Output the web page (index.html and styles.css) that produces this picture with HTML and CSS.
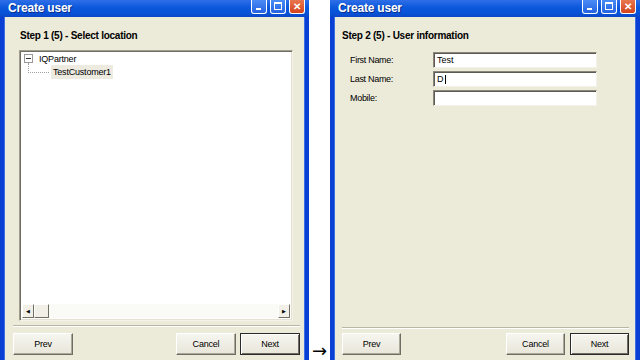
FILE: index.html
```html
<!doctype html>
<html>
<head>
<meta charset="utf-8">
<title>Create user</title>
<link rel="stylesheet" href="styles.css">
</head>
<body>
<div class="desk">
	<div class="win win-one">
		<div class="titlebar">
			<span class="title">Create user</span>
			<div class="tbtns">
				<span class="tb tb-min"><i></i></span>
				<span class="tb tb-max"><i></i></span>
				<span class="tb tb-close">&#x2715;</span>
			</div>
		</div>
		<div class="frame">
			<div class="step">Step 1 (5) - Select location</div>
			<div class="tree">
				<div class="tree-list">
					<div class="node root"><span class="expander"></span>IQPartner</div>
					<div class="node child"><span class="branch"></span><span class="sel">TestCustomer1</span></div>
				</div>
				<div class="hscroll">
					<span class="sbtn">&#9664;</span>
					<span class="thumb"></span>
					<span class="track"></span>
					<span class="sbtn">&#9654;</span>
				</div>
			</div>
			<div class="sep"></div>
			<div class="actions">
				<button class="btn">Prev</button>
				<span class="spacer"></span>
				<button class="btn">Cancel</button>
				<button class="btn btn-default">Next</button>
			</div>
		</div>
	</div>

	<div class="arrow">&rarr;</div>

	<div class="win win-two">
		<div class="titlebar">
			<span class="title">Create user</span>
			<div class="tbtns">
				<span class="tb tb-min"><i></i></span>
				<span class="tb tb-max"><i></i></span>
				<span class="tb tb-close">&#x2715;</span>
			</div>
		</div>
		<div class="frame">
			<div class="step">Step 2 (5) - User information</div>
			<div class="form">
				<div class="row"><label>First Name:</label><div class="field">Test</div></div>
				<div class="row"><label>Last Name:</label><div class="field">D<span class="caret"></span></div></div>
				<div class="row"><label>Mobile:</label><div class="field"></div></div>
			</div>
			<div class="sep"></div>
			<div class="actions">
				<button class="btn">Prev</button>
				<span class="spacer"></span>
				<button class="btn">Cancel</button>
				<button class="btn btn-default">Next</button>
			</div>
		</div>
	</div>
</div>
</body>
</html>
```

FILE: styles.css
```css
*{margin:0;padding:0;box-sizing:border-box;}
body{background:#fff;font-family:"Liberation Sans",Arial,sans-serif;font-size:9px;color:#000;overflow:hidden;}

.desk{display:flex;width:640px;height:360px;}

/* window */
.win{display:flex;flex-direction:column;height:360px;}
.win-one{width:309px;}
.win-two{width:310px;}

.titlebar{height:17px;display:flex;align-items:flex-start;justify-content:space-between;
background:linear-gradient(#2f6fe8,#0b58dc 45%,#0751d6 80%,#0a47c4);
padding:0 4px 0 8px;}
.title{color:#fff;font-weight:bold;font-size:12px;line-height:16px;letter-spacing:-0.2px;text-shadow:1px 1px 0 #0a2f8a;}
.tbtns{display:flex;gap:3px;}
.tb{width:16px;height:14px;border:1px solid #fff;border-top:none;border-radius:0 0 3px 3px;
background:linear-gradient(#4a8cf6,#2563e0);position:relative;display:block;}
.tb-min i{position:absolute;left:4px;bottom:3px;width:5px;height:2px;background:#fff;}
.tb-max i{position:absolute;left:3px;top:2px;width:8px;height:8px;border:1px solid #fff;border-top-width:2px;}
.tb-close{background:linear-gradient(#e8774f,#d4431c);color:#fff;font-size:10px;font-weight:bold;line-height:13px;text-align:center;}

.frame{flex:1;display:flex;flex-direction:column;background:#ecead9;
border-left:4px solid #0a3fd3;border-right:4px solid #0a3fd3;
box-shadow:inset 1px 0 0 #3a6fe8,inset -1px 0 0 #3a6fe8;
padding-top:13px;padding-bottom:5px;min-height:0;}

.step{font-weight:bold;font-size:10px;line-height:12px;letter-spacing:-0.25px;}
.win-one .step{padding-left:16px;}
.win-two .step{padding-left:8px;}

/* tree */
.tree{flex:1;margin:8px 12px 0 15px;background:#fff;display:flex;flex-direction:column;
border:1px solid;border-color:#a09d8f #f4f2e8 #f4f2e8 #a09d8f;
box-shadow:inset 1px 1px 0 #716f64,inset -1px -1px 0 #e4e1d2;}
.tree-list{flex:1;padding:1px 0 0 4px;}
.node{display:flex;align-items:center;height:13px;letter-spacing:-0.2px;}
.expander{width:9px;height:9px;border:1px solid #9a9a9a;margin-right:6px;position:relative;background:#fff;}
.expander::after{content:"";position:absolute;left:1px;top:3px;width:5px;height:1px;background:#333;}
.child{padding-left:4px;}
.branch{width:21px;height:10px;margin-top:-8px;border-left:1px dotted #a0a0a0;border-bottom:1px dotted #a0a0a0;}
.sel{background:#edebe0;padding:1px 2px;margin-left:2px;line-height:12px;}

.hscroll{height:14px;display:flex;margin:0 2px 2px 2px;background:#fafaf6;}
.sbtn,.thumb{width:12px;height:14px;background:#f1efe6;border:1px solid;border-color:#fff #716f64 #716f64 #fff;
font-size:5px;line-height:12px;text-align:center;color:#000;}
.thumb{width:15px;}
.track{flex:1;}

.sep{height:2px;border-top:1px solid #b9b6a7;border-bottom:1px solid #fff;}
.win-one .sep{margin:4px 5px 6px 9px;}
.win-two .sep{margin:auto 7px 4px 8px;}

/* form */
.form{display:flex;flex-direction:column;gap:3px;padding:10px 0 0 16px;}
.row{display:flex;align-items:center;height:16px;}
.row label{width:83px;letter-spacing:-0.3px;}
.field{width:164px;height:16px;background:#fff;border:1px solid;border-color:#8a877a #f4f2e8 #f4f2e8 #8a877a;
box-shadow:inset 1px 1px 0 #5c5a52;padding:2px 3px;line-height:11px;display:flex;align-items:center;}
.caret{width:1px;height:9px;background:#000;margin-left:1px;}

/* buttons */
.actions{display:flex;gap:4px;}
.win-one .actions{padding:0 5px 0 9px;}
.win-two .actions{padding:0 7px 0 8px;gap:5px;}
.spacer{flex:1;}
.btn{width:60px;height:22px;font-family:"Liberation Sans",Arial,sans-serif;font-size:9px;color:#000;
background:linear-gradient(#f6f5ef,#e8e6da);border:1px solid;border-color:#fff #6f6d63 #6f6d63 #fff;
box-shadow:inset -1px -1px 0 #aca899;letter-spacing:-0.2px;}
.win-two .btn{width:59px;}
.btn-default{border:1px solid #2a2a2a;box-shadow:inset 1px 1px 0 #fff,inset -1px -1px 0 #6f6d63;}

.arrow{width:21px;display:flex;align-items:flex-end;justify-content:center;
font-family:"DejaVu Sans",sans-serif;font-size:18px;line-height:16px;padding-bottom:1px;}
```
